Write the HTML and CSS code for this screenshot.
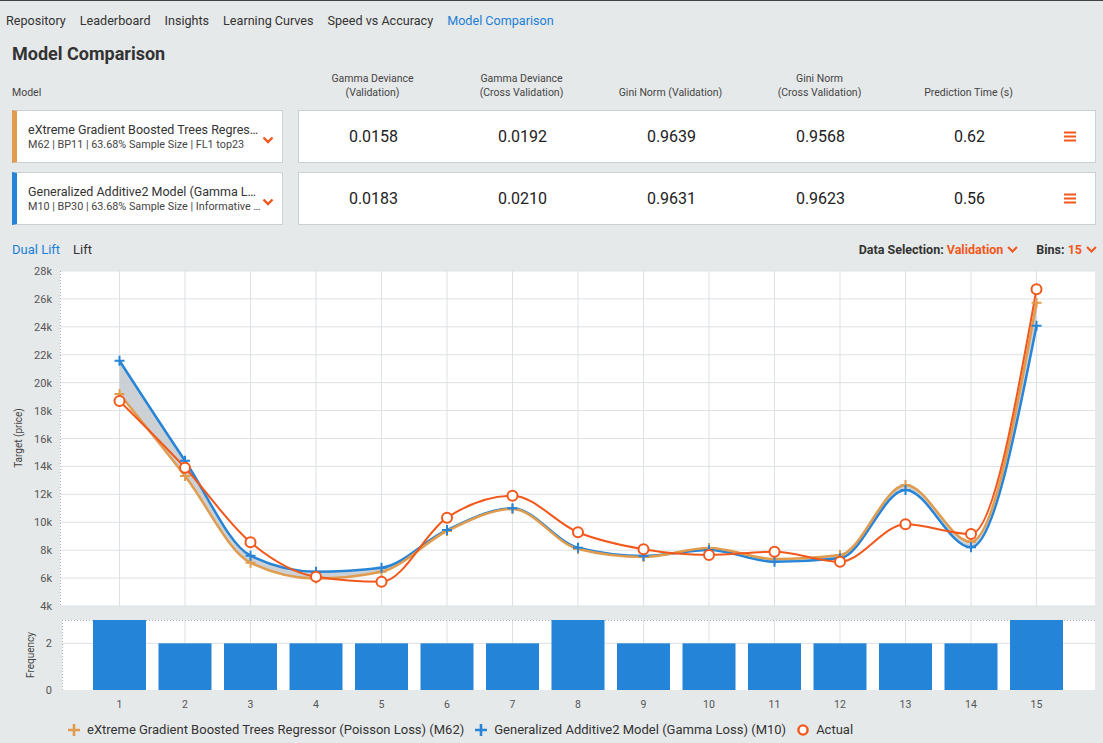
FILE: index.html
```html
<!DOCTYPE html>
<html>
<head>
<meta charset="utf-8">
<title>Model Comparison</title>
<link rel="stylesheet" href="styles.css">
</head>
<body>
<nav class="nav">
  <a class="nav-item">Repository</a>
  <a class="nav-item">Leaderboard</a>
  <a class="nav-item">Insights</a>
  <a class="nav-item">Learning Curves</a>
  <a class="nav-item">Speed vs Accuracy</a>
  <a class="nav-item active">Model Comparison</a>
</nav>
<h1 class="title">Model Comparison</h1>
<div class="thead">
  <div class="th-model">Model</div>
  <div class="th">Gamma Deviance<br>(Validation)</div>
  <div class="th">Gamma Deviance<br>(Cross Validation)</div>
  <div class="th">Gini Norm (Validation)</div>
  <div class="th">Gini Norm<br>(Cross Validation)</div>
  <div class="th">Prediction Time (s)</div>
</div>
<div class="row">
  <div class="model-card orange">
    <div class="model-text">
      <div class="model-name">eXtreme Gradient Boosted Trees Regressor (Poisson Loss)</div>
      <div class="model-meta">M62 | BP11 | 63.68% Sample Size | FL1 top23</div>
    </div>
    <svg class="chev" width="12" height="8" viewBox="0 0 12 8"><polyline points="1.5,1.5 6,6 10.5,1.5" fill="none" stroke="#f2571b" stroke-width="2.4"/></svg>
  </div>
  <div class="metrics">
    <div class="cell">0.0158</div>
    <div class="cell">0.0192</div>
    <div class="cell">0.9639</div>
    <div class="cell">0.9568</div>
    <div class="cell">0.62</div>
    <div class="menu"><svg width="12" height="11" viewBox="0 0 12 11"><path d="M0 1.5H12M0 5.5H12M0 9.5H12" stroke="#f2571b" stroke-width="2"/></svg></div>
  </div>
</div>
<div class="row">
  <div class="model-card blue">
    <div class="model-text">
      <div class="model-name">Generalized Additive2 Model (Gamma Loss)</div>
      <div class="model-meta">M10 | BP30 | 63.68% Sample Size | Informative Features</div>
    </div>
    <svg class="chev" width="12" height="8" viewBox="0 0 12 8"><polyline points="1.5,1.5 6,6 10.5,1.5" fill="none" stroke="#f2571b" stroke-width="2.4"/></svg>
  </div>
  <div class="metrics">
    <div class="cell">0.0183</div>
    <div class="cell">0.0210</div>
    <div class="cell">0.9631</div>
    <div class="cell">0.9623</div>
    <div class="cell">0.56</div>
    <div class="menu"><svg width="12" height="11" viewBox="0 0 12 11"><path d="M0 1.5H12M0 5.5H12M0 9.5H12" stroke="#f2571b" stroke-width="2"/></svg></div>
  </div>
</div>
<div class="toolbar">
  <div class="tabs">
    <span class="tab active">Dual Lift</span>
    <span class="tab">Lift</span>
  </div>
  <div class="selectors">
    <span class="sel">Data Selection: <span class="sel-value">Validation</span>
      <svg class="sel-chev" width="11" height="7" viewBox="0 0 11 7"><polyline points="1,1 5.5,5.5 10,1" fill="none" stroke="#f2571b" stroke-width="2"/></svg></span>
    <span class="sel">Bins: <span class="sel-value">15</span>
      <svg class="sel-chev" width="11" height="7" viewBox="0 0 11 7"><polyline points="1,1 5.5,5.5 10,1" fill="none" stroke="#f2571b" stroke-width="2"/></svg></span>
  </div>
</div>
<svg id="chart" class="chart" width="1103" height="454" viewBox="0 262 1103 454"></svg>
<div class="legend">
  <span class="legend-item"><svg width="12" height="12" viewBox="0 0 12 12"><path d="M6 0V12M0 6H12" stroke="#df9c4f" stroke-width="2.6"/></svg>eXtreme Gradient Boosted Trees Regressor (Poisson Loss) (M62)</span>
  <span class="legend-item"><svg width="12" height="12" viewBox="0 0 12 12"><path d="M6 0V12M0 6H12" stroke="#2784d7" stroke-width="2.6"/></svg>Generalized Additive2 Model (Gamma Loss) (M10)</span>
  <span class="legend-item"><svg width="12" height="12" viewBox="0 0 12 12"><circle cx="6" cy="6" r="4.6" fill="#fff" stroke="#f2571b" stroke-width="2.4"/></svg>Actual</span>
</div>
<script src="script.js"></script>
</body>
</html>
```

FILE: styles.css
```css
* { box-sizing: border-box; }
html, body { margin: 0; padding: 0; }
body {
  width: 1103px;
  height: 743px;
  overflow: hidden;
  background: #e6e9ea;
  font-family: Roboto, "Liberation Sans", Arial, sans-serif;
  color: #333;
}
.nav {
  display: flex;
  align-items: center;
  gap: 14px;
  height: 40px;
  border-top: 1px solid #3d4448;
  padding-left: 6px;
  font-size: 12.6px;
  color: #333;
}
.nav-item { white-space: nowrap; }
.nav-item.active { color: #1a7fd6; }
.title {
  margin: 4px 0 0 12px;
  font-size: 18px;
  line-height: 20px;
  font-weight: 700;
  color: #333;
}
.thead {
  display: flex;
  align-items: flex-end;
  margin-top: 8px;
  padding-left: 12px;
  font-size: 10.5px;
  line-height: 14px;
  color: #444;
}
.th-model { width: 286px; }
.th { width: 149px; text-align: center; }
.row {
  display: flex;
  height: 53px;
  margin: 10px 7px 0 12px;
}
.row + .row { margin-top: 9px; }
.model-card {
  width: 271px;
  background: #fff;
  border: 1px solid #c9d0d6;
  border-left: 5px solid #c9d0d6;
  display: flex;
  align-items: center;
  padding-left: 11px;
}
.model-card.orange { border-left-color: #df9c4f; }
.model-card.blue { border-left-color: #2784d7; }
.model-text { width: 234px; min-width: 0; }
.model-name {
  font-size: 12.5px;
  line-height: 17px;
  white-space: nowrap;
  overflow: hidden;
  text-overflow: ellipsis;
  color: #333;
}
.model-meta {
  font-size: 10.8px;
  line-height: 14px;
  white-space: nowrap;
  overflow: hidden;
  text-overflow: ellipsis;
  color: #444;
}
.chev { margin: 6px 0 0 0; flex: none; }
.metrics {
  flex: 1;
  margin-left: 15px;
  background: #fff;
  border: 1px solid #c9d0d6;
  display: flex;
  align-items: center;
}
.cell {
  width: 149px;
  text-align: center;
  font-size: 16px;
  color: #222;
}
.menu { flex: 1; display: flex; justify-content: center; }
.toolbar {
  display: flex;
  align-items: center;
  justify-content: space-between;
  height: 16px;
  margin: 16px 6px 0 12px;
}
.tabs { display: flex; gap: 13px; font-size: 13px; color: #333; }
.tab.active { color: #1a7fd6; }
.selectors {
  display: flex;
  align-items: center;
  font-size: 12.5px;
  font-weight: 700;
  color: #333;
}
.sel { display: flex; align-items: center; white-space: pre; }
.sel + .sel { margin-left: 18px; }
.sel-value { color: #f2571b; }
.sel-chev { margin-left: 4px; }
.chart { display: block; margin-top: 5px; }
.chart text { font-family: Roboto, "Liberation Sans", Arial, sans-serif; }
.legend {
  display: flex;
  align-items: center;
  gap: 11px;
  height: 27px;
  padding-left: 68px;
  font-size: 13px;
  color: #333;
}
.legend-item { display: flex; align-items: center; gap: 7px; white-space: nowrap; }
```

FILE: script.js
```js
(function () {
  var NS = 'http://www.w3.org/2000/svg';
  var svg = document.getElementById('chart');
  function el(tag, attrs, text) {
    var e = document.createElementNS(NS, tag);
    for (var k in attrs) e.setAttribute(k, attrs[k]);
    if (text != null) e.textContent = text;
    svg.appendChild(e);
    return e;
  }
  var L = 60, R = 1095, TOP = 271, BOT = 606;
  var X0 = 119.5, DX = 65.5, N = 15;
  var STEP = (BOT - TOP) / 12;
  function bx(i) { return X0 + i * DX; }

  // line plot background and grid
  el('rect', { x: L, y: TOP, width: R - L, height: BOT - TOP, fill: '#fff' });
  for (var k = 0; k <= 12; k++) {
    var y = TOP + k * STEP;
    el('line', { x1: L, x2: R, y1: y, y2: y, stroke: '#dde1e4', 'stroke-width': 1 });
    el('text', { x: 52, y: y + 4, 'text-anchor': 'end', 'font-size': 11, fill: '#555' }, (28 - 2 * k) + 'k');
  }
  for (var i = 0; i < N; i++) {
    el('line', { x1: bx(i), x2: bx(i), y1: TOP, y2: BOT, stroke: '#dde1e4', 'stroke-width': 1 });
  }
  el('line', { x1: L + 0.5, x2: L + 0.5, y1: TOP, y2: BOT, stroke: '#a9b2ba', 'stroke-width': 1, 'stroke-dasharray': '1 2' });
  el('text', { x: 0, y: 0, 'font-size': 10, fill: '#444', 'text-anchor': 'middle', transform: 'translate(21.5 438) rotate(-90)' }, 'Target (price)');

  // frequency panel
  var FT = 620, FB = 690, FL = 62;
  el('rect', { x: FL, y: FT, width: R - FL, height: FB - FT, fill: '#fff' });
  var f2 = FB - 2 * (FB - FT) / 3;
  el('line', { x1: FL, x2: R, y1: f2, y2: f2, stroke: '#dde1e4', 'stroke-width': 1 });
  for (var i2 = 0; i2 < N; i2++) {
    el('line', { x1: bx(i2), x2: bx(i2), y1: FT, y2: FB, stroke: '#dde1e4', 'stroke-width': 1 });
  }
  el('line', { x1: FL, x2: R, y1: FT + 0.5, y2: FT + 0.5, stroke: '#a9b2ba', 'stroke-width': 1, 'stroke-dasharray': '1 2' });
  el('line', { x1: FL + 0.5, x2: FL + 0.5, y1: FT, y2: FB, stroke: '#a9b2ba', 'stroke-width': 1, 'stroke-dasharray': '1 2' });
  var freq = [3, 2, 2, 2, 2, 2, 2, 3, 2, 2, 2, 2, 2, 2, 3];
  for (var b = 0; b < N; b++) {
    var top = FB - freq[b] * (FB - FT) / 3;
    el('rect', { x: bx(b) - 26.5, y: top, width: 53, height: FB - top, fill: '#2484d8' });
    el('text', { x: bx(b), y: 708, 'text-anchor': 'middle', 'font-size': 10.5, fill: '#555' }, String(b + 1));
  }
  el('text', { x: 52, y: f2 + 4, 'text-anchor': 'end', 'font-size': 11, fill: '#555' }, '2');
  el('text', { x: 52, y: FB + 4, 'text-anchor': 'end', 'font-size': 11, fill: '#555' }, '0');
  el('text', { x: 0, y: 0, 'font-size': 10, fill: '#444', 'text-anchor': 'middle', transform: 'translate(33.5 655) rotate(-90)' }, 'Frequency');

  // series (pixel y positions)
  var actual = [401, 467.7, 542.3, 576.7, 581.7, 517.7, 495.7, 532.3, 549.3, 555, 551.7, 561.7, 524.3, 534, 289.3];
  var blue = [360.7, 460.7, 555.7, 571.7, 567.7, 530, 508.3, 547.7, 556, 550, 561.7, 558.3, 490, 547.3, 325.7];
  var orange = [394, 476, 562.7, 578.5, 571.7, 531, 509, 549, 557, 548, 559, 555, 485, 541.7, 302.7];

  function sign(v) { return v < 0 ? -1 : 1; }
  function tangents(ys) {
    var n = ys.length, t = [];
    for (var i = 1; i < n - 1; i++) {
      var s0 = (ys[i] - ys[i - 1]) / DX, s1 = (ys[i + 1] - ys[i]) / DX;
      var p = (s0 + s1) / 2;
      t[i] = (sign(s0) + sign(s1)) * Math.min(Math.abs(s0), Math.abs(s1), 0.5 * Math.abs(p)) || 0;
    }
    t[0] = (3 * (ys[1] - ys[0]) / DX - t[1]) / 2;
    t[n - 1] = (3 * (ys[n - 1] - ys[n - 2]) / DX - t[n - 2]) / 2;
    return t;
  }
  function segments(ys) {
    var t = tangents(ys), segs = [], d = DX / 3;
    for (var i = 0; i < ys.length - 1; i++) {
      var x0 = bx(i), x1 = bx(i + 1);
      segs.push([x0, ys[i], x0 + d, ys[i] + d * t[i], x1 - d, ys[i + 1] - d * t[i + 1], x1, ys[i + 1]]);
    }
    return segs;
  }
  function f(v) { return v.toFixed(2); }
  function pathOf(segs) {
    var d = 'M' + f(segs[0][0]) + ' ' + f(segs[0][1]);
    segs.forEach(function (s) {
      d += 'C' + f(s[2]) + ' ' + f(s[3]) + ' ' + f(s[4]) + ' ' + f(s[5]) + ' ' + f(s[6]) + ' ' + f(s[7]);
    });
    return d;
  }
  function reversePath(segs) {
    var d = '';
    for (var i = segs.length - 1; i >= 0; i--) {
      var s = segs[i];
      d += 'C' + f(s[4]) + ' ' + f(s[5]) + ' ' + f(s[2]) + ' ' + f(s[3]) + ' ' + f(s[0]) + ' ' + f(s[1]);
    }
    return d;
  }
  var bSegs = segments(blue), oSegs = segments(orange), aSegs = segments(actual);
  var last = oSegs[oSegs.length - 1];
  var area = pathOf(bSegs) + 'L' + f(last[6]) + ' ' + f(last[7]) + reversePath(oSegs) + 'Z';
  el('path', { d: area, fill: '#c3c9ce', 'fill-opacity': 0.85 });
  el('path', { d: pathOf(bSegs), fill: 'none', stroke: '#2784d7', 'stroke-width': 2.5 });
  el('path', { d: pathOf(oSegs), fill: 'none', stroke: '#df9c4f', 'stroke-width': 2.5 });
  el('path', { d: pathOf(aSegs), fill: 'none', stroke: '#f2571b', 'stroke-width': 2 });
  function plus(x, y, c) {
    el('path', { d: 'M' + (x - 5) + ' ' + y + 'H' + (x + 5) + 'M' + x + ' ' + (y - 5) + 'V' + (y + 5), stroke: c, 'stroke-width': 2, fill: 'none' });
  }
  for (var m = 0; m < N; m++) {
    plus(bx(m), orange[m], '#df9c4f');
    plus(bx(m), blue[m], '#2784d7');
  }
  for (var a = 0; a < N; a++) {
    el('circle', { cx: bx(a), cy: actual[a], r: 5, fill: '#fff', stroke: '#f2571b', 'stroke-width': 2 });
  }
})();
```
